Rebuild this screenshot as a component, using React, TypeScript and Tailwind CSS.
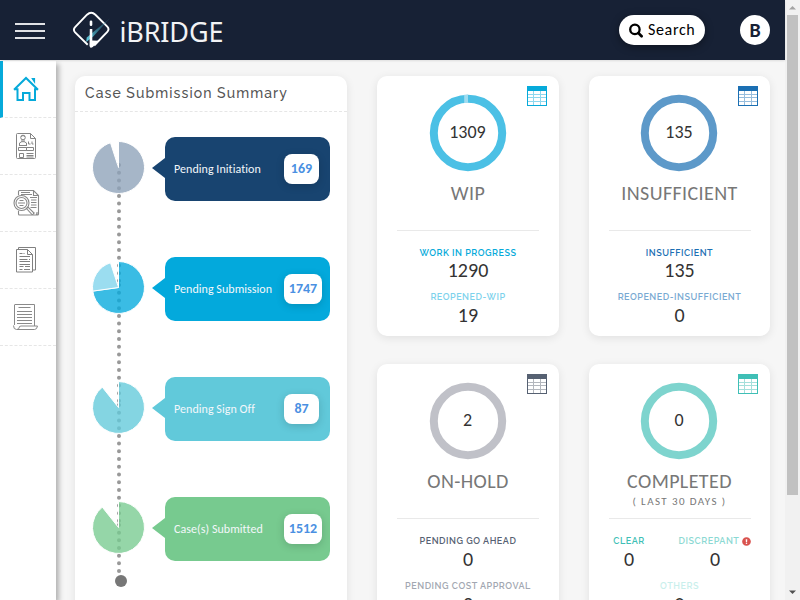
import React from "react";
import { FaExclamationCircle } from "react-icons/fa";

const polar = (deg: number, r: number, cx: number, cy: number) => {
  const a = (deg * Math.PI) / 180;
  return `${(cx + r * Math.sin(a)).toFixed(2)} ${(cy - r * Math.cos(a)).toFixed(2)}`;
};

const slice = (from: number, to: number, r: number, c: number) =>
  `M${c} ${c}L${polar(from, r, c, c)}A${r} ${r} 0 ${to - from > 180 ? 1 : 0} 1 ${polar(to, r, c, c)}Z`;

type Slice = { from: number; to: number; color: string };

function Pie({ slices }: { slices: Slice[] }) {
  return (
    <svg className="relative h-[54px] w-[54px]" viewBox="0 0 54 54">
      {slices.map((s) => (
        <path key={s.from} d={slice(s.from, s.to, 26, 26.5)} fill={s.color} fillOpacity="0.78" stroke="#fff" strokeWidth="1" />
      ))}
    </svg>
  );
}

function Logo() {
  return (
    <svg className="h-[40px] w-[40px]" viewBox="0 0 40 40" fill="none">
      <defs>
        <linearGradient id="streak" x1="14" y1="30" x2="38" y2="8" gradientUnits="userSpaceOnUse">
          <stop stopColor="#5cc9dd" />
          <stop offset="1" stopColor="#2b6f86" stopOpacity="0.2" />
        </linearGradient>
      </defs>
      <g transform="translate(.7 0)">
        <path d="M15 34.800L2.400 22.400Q0 19.800 2.400 17.200L14.300 4.700Q18.500 .6 22.700 4.700L34.600 16.600Q37 19.200 34.600 21.800L21.500 35.500" stroke="#fff" strokeWidth="1.900" />
        <path d="M13.500 32L14 27.500L37.500 8L20.500 26.500Z" fill="url(#streak)" />
        <path d="M18.300 11.800v3" stroke="#fff" strokeWidth="2.600" strokeLinecap="round" />
        <path d="M17.100 19h2.500v11.500l6.500.3-6 6.200q-1.500 1.200-2.500.6l-.8-1.600z" fill="#fff" />
      </g>
    </svg>
  );
}

function SearchGlyph() {
  return (
    <svg className="mr-[5px] h-[15px] w-[14px]" viewBox="0 0 14 15" fill="none" stroke="#000">
      <circle cx="5.900" cy="6.400" r="4.700" strokeWidth="2.300" />
      <path d="M9.400 10l3.200 3.200" strokeWidth="2.700" strokeLinecap="round" />
    </svg>
  );
}

function HomeIcon() {
  return (
    <svg className="h-[26px] w-[26px]" viewBox="0 0 26 26" fill="none" stroke="#06aada" strokeWidth="2">
      <path d="M1 13.800L13 2 25 13.800M1 13.200h3.500V24H10v-7h6.500v7H22V13.200h3" />
      <path d="M19.300 2.700h2.200v3.300z" fill="#06aada" strokeWidth="1.200" />
    </svg>
  );
}

function ProfileIcon() {
  return (
    <svg className="h-[28px] w-[26px]" viewBox="0 0 26 28" fill="none" stroke="#858585" strokeWidth="1">
      <path d="M5 1.500h12.500l5 5v19q0 1-1 1h-17q-1 0-1-1V2.500q0-1 1-1zM17.500 1.500v5h5" />
      <circle cx="10" cy="5.500" r="2.300" />
      <path d="M8 4.500q2-2 4 0M9 7.500v2.200h2V7.500M6.500 13.500v-2.500l2.500-1.500M13.500 13.500v-2.500L11 9.500M6 13.500h8M15.500 9.500v2.500h2M19 9.500v2.500h1.500M5.500 15.500h8v3h-8zM13.500 15.500h7v3h-7zM6.500 21.500h4v4h-4zM13.500 21.500h7M13.500 23.500h7M13.500 25h7" />
    </svg>
  );
}

function SearchDocIcon() {
  return (
    <svg className="h-[28px] w-[28px]" viewBox="0 0 28 28" fill="none" stroke="#888" strokeWidth="1.100">
      <path d="M5.500 6V2.500q0-1 1-1H20.500l5 5v18.500q0 1-1 1h-18q-1 0-1-1V22M20.500 1.500v5h5M8 3.500h9M8 5.500h11M17 8.500h7M18 11h5.500M18 13.500h5.500M18 16h5.500M17.500 18.500h6M21 24h.8M23 25h1v-2" />
      <circle cx="8.500" cy="14" r="7.500" fill="#fff" />
      <circle cx="8.500" cy="14" r="5.500" />
      <path d="M6.500 11.500h4M5 14h7M6.500 16.500h4M13.500 19.500l1.500-1.500 5.500 5.500q.5 2-1.500 2z" />
    </svg>
  );
}

function PagesIcon() {
  return (
    <svg className="h-[28px] w-[26px]" viewBox="0 0 26 28" fill="none" stroke="#808080" strokeWidth="1">
      <path d="M3.500 3.500h11l5 5v17.500h-16zM14.500 3.500v5h5" />
      <path d="M5.500 3.500v-2h17V24h-3" />
      <path d="M6.500 7.500h3M10.500 7.500h1M6.500 10.500h10.500M6.500 13.500h8M16 13.500h1M6.500 15.500h10.500M6.500 18.500h10.500M6.500 20.500h4M12 20.500h5M6.500 23.500h3M11 23.500h6" />
    </svg>
  );
}

function ScrollIcon() {
  return (
    <svg className="h-[28px] w-[26px]" viewBox="0 0 26 28" fill="none" stroke="#8a8a8a" strokeWidth="1">
      <path d="M1.500 22V2q0-.5.500-.5h19.500v21.500M.5 22.500q0 4 3 4h18q2.500 0 3-3.500H8q-2 0-2 2 0 1-1.500 1" />
      <path d="M5.500 4.500h12M4 8.500h15M4 11.500h15M4 14.500h15M4 17.500h15M4 20.500h15" />
    </svg>
  );
}

function TableIcon({ color, line }: { color: string; line: string }) {
  return (
    <svg className="absolute right-[12px] top-[10px] h-[20px] w-[20px]" viewBox="0 0 20 20" shapeRendering="crispEdges">
      <path d="M0 0h20v20H0z" fill={color} />
      <path d="M1 5h18v14H1z" fill="#fff" />
      <path d="M1 8.500h18M1 11.500h18M1 15.500h18M6.500 5v14M13.500 5v14" stroke={line} strokeWidth="1" fill="none" />
    </svg>
  );
}

const sideIcons = [HomeIcon, ProfileIcon, SearchDocIcon, PagesIcon, ScrollIcon];

const stages = [
  { label: "Pending Initiation", value: "169", box: "bg-[#184470]", arrow: "border-r-[#184470]", pad: "w-[35px]", slices: [{ from: 0, to: 342, color: "#8da1b9" }] },
  { label: "Pending Submission", value: "1747", box: "bg-[#03a9dc]", arrow: "border-r-[#03a9dc]", pad: "w-[38px]", slices: [{ from: 0, to: 262, color: "#03a9dc" }, { from: 262, to: 342, color: "#7fd3ec" }] },
  { label: "Pending Sign Off", value: "87", box: "bg-[#61c9da]", arrow: "border-r-[#61c9da]", pad: "w-[35px]", slices: [{ from: 0, to: 321.5, color: "#61c9da" }] },
  { label: "Case(s) Submitted", value: "1512", box: "bg-[#77ca8f]", arrow: "border-r-[#77ca8f]", pad: "w-[38px]", slices: [{ from: 0, to: 321.5, color: "#77ca8f" }] },
];

function Stat({ label, value, color }: { label: React.ReactNode; value: string; color: string }) {
  return (
    <div className="flex h-[45px] flex-col items-center whitespace-nowrap">
      <div className={`flex h-[12px] items-center pt-px font-['Raleway','Lato',sans-serif] text-[9px] font-semibold leading-none tracking-[0.53px] ${color}`}>{label}</div>
      <div className="flex h-[24px] items-center pb-px text-[20px] leading-none text-[#333]">{value}</div>
    </div>
  );
}

type CardProps = {
  total: string;
  title: string;
  ring: string;
  color: string;
  line: string;
  note?: string;
  marker?: boolean;
  tall?: boolean;
  children: React.ReactNode;
};

function Card({ total, title, ring, color, line, note, marker, tall, children }: CardProps) {
  return (
    <section className={`relative flex flex-col items-center rounded-[10px] bg-white pt-[18px] shadow-[0_2px_10px_rgba(0,0,0,0.09)] ${tall ? "h-[305px]" : "h-[260px]"}`}>
      <TableIcon color={color} line={line} />
      <div className="mr-px grid h-[78px] w-[78px] place-items-center">
        <svg className="col-start-1 row-start-1 h-[78px] w-[78px]" viewBox="0 0 78 78" fill="none">
          <circle cx="39" cy="39" r="34.200" stroke={ring} strokeWidth="8" />
          {marker && <path d="M35.200 9V.8q2-.3 3.800-.3V9z" fill="#9fdcf0" />}
        </svg>
        <span className="col-start-1 row-start-1 pb-[2px] text-[18px] leading-none text-[#333]">{total}</span>
      </div>
      <h2 className="mt-[10px] flex h-[22px] items-center whitespace-nowrap text-[20px] leading-none tracking-[0.4px] text-[#777]">{title}</h2>
      <div className="flex h-[26px] items-start pt-[4px] text-[11px] leading-none tracking-[1.4px] text-[#777]">{note}</div>
      <div className="mb-[16px] h-px w-[142px] bg-[#e9e9e9]" />
      {children}
    </section>
  );
}

export default function App() {
  return (
    <div className="flex h-[600px] w-[800px] overflow-hidden bg-[#f6f6f6] font-['Carlito','Calibri','Lato',sans-serif]">
      <div className="flex w-[785px] flex-col">
        <header className="z-10 flex h-[60px] shrink-0 items-center bg-[#172135] shadow-[0_1px_2px_rgba(0,0,0,0.1)]">
          <div className="ml-[15px] mt-[2px] flex w-[30px] flex-col gap-[5px]">
            <span className="h-[2px] bg-[#e0e2e5]" />
            <span className="h-[2px] bg-[#e0e2e5]" />
            <span className="h-[2px] bg-[#e0e2e5]" />
          </div>
          <div className="ml-[27px] flex items-center">
            <Logo />
            <span className="ml-[7.5px] mt-[3px] font-['Noto_Sans',sans-serif] text-[27px] font-normal leading-none tracking-[-0.15px] text-[#f2f3f5]">iBRIDGE</span>
          </div>
          <div className="ml-auto mr-[35px] flex h-[30px] w-[86px] items-center rounded-full bg-white pl-[10px] text-[16px] leading-none tracking-[0.65px] text-black shadow-[0_2px_8px_rgba(0,0,0,0.4)]">
            <SearchGlyph />
            Search
          </div>
          <div className="mr-[15px] flex h-[30px] w-[30px] items-center justify-center rounded-full bg-white text-[20px] font-bold leading-none text-[#172135]">B</div>
        </header>

        <div className="flex h-[540px]">
          <nav className="mt-px w-[56px] bg-white shadow-[3px_3px_5px_rgba(0,0,0,0.28)]">
            {sideIcons.map((Icon, i) => (
              <div key={i} className={`flex h-[57px] items-center border-b border-dashed border-[#e6e6e6] ${i === 0 ? "border-l-[3px] border-l-[#06aada] [border-left-style:solid] pl-[10px]" : "pl-[13px]"}`}>
                <Icon />
              </div>
            ))}
          </nav>

          <main className="ml-[19px] mt-[16px] flex items-start">
            <section className="h-[560px] w-[272px] rounded-t-[10px] bg-white shadow-[0_2px_10px_rgba(0,0,0,0.09)]">
              <h1 className="flex h-[36px] items-center whitespace-nowrap border-b border-dashed border-[#e6e6e6] pb-px pl-[10px] font-['Raleway','Lato',sans-serif] text-[14px] font-medium leading-none tracking-[1.08px] text-[#555]">Case Submission Summary</h1>
              <div className="relative pt-[25px]">
                <div className="absolute left-[42px] top-[51px]">
                  <div className="h-[120px] border-l-4 border-dotted border-[#999]" />
                  <div className="h-[120px] border-l-4 border-dotted border-[#999]" />
                  <div className="h-[120px] border-l-4 border-dotted border-[#999]" />
                  <div className="h-[50px] border-l-4 border-dotted border-[#999]" />
                </div>
                <div className="absolute left-[40px] top-[463px] h-[12px] w-[12px] rounded-full bg-[#777]" />
                {stages.map((s) => (
                  <div key={s.label} className="mb-[56px] flex h-[64px] items-center">
                    <div className="ml-[17px] mr-[6px] h-[56px]">
                      <Pie slices={s.slices} />
                    </div>
                    <div className={`mb-[2px] h-0 w-0 border-y-[10px] border-r-[13px] border-y-transparent ${s.arrow}`} />
                    <div className={`flex h-[64px] w-[165px] items-center rounded-[10px] pl-[9px] ${s.box}`}>
                      <span className="w-[110px] whitespace-nowrap text-[12px] leading-none tracking-[0.05px] text-[#f3f7fa] [font-variant-ligatures:none]">{s.label}</span>
                      <span className={`flex h-[30px] items-center justify-center rounded-[8px] bg-white text-[14px] font-bold leading-none text-[#4a90e2] shadow-[0_2px_8px_rgba(0,0,0,0.16)] ${s.pad}`}>{s.value}</span>
                    </div>
                  </div>
                ))}
              </div>
            </section>

            <div className="ml-[30px] grid grid-cols-[182px_181px] gap-x-[30px] gap-y-[28px]">
              <Card total="1309" title="WIP" ring="#4bc0e5" color="#06aada" line="#8ed7ee" marker>
                <Stat label="WORK IN PROGRESS" value="1290" color="text-[#06aada]" />
                <Stat label="REOPENED-WIP" value="19" color="text-[#7dd2ec]" />
              </Card>
              <Card total="135" title="INSUFFICIENT" ring="#5d99c9" color="#1b6fb3" line="#96bddd">
                <Stat label="INSUFFICIENT" value="135" color="text-[#1b6fb3]" />
                <Stat label="REOPENED-INSUFFICIENT" value="0" color="text-[#78a9d2]" />
              </Card>
              <Card total="2" title="ON-HOLD" ring="#c0c1c8" color="#566172" line="#b3b7bd" tall>
                <Stat label="PENDING GO AHEAD" value="0" color="text-[#566172]" />
                <Stat label="PENDING COST APPROVAL" value="2" color="text-[#a2a7b1]" />
              </Card>
              <Card total="0" title="COMPLETED" ring="#7ed4ce" color="#3fbfb6" line="#a4dfdb" note="( LAST 30 DAYS )" tall>
                <div className="flex w-[181px]">
                  <div className="w-[80px]">
                    <Stat label="CLEAR" value="0" color="text-[#3fbfb6]" />
                  </div>
                  <div className="w-[92px]">
                    <Stat label={<>DISCREPANT<FaExclamationCircle className="ml-[3px] h-[9px] w-[9px] text-[#d9534f]" /></>} value="0" color="text-[#8cd9d3]" />
                  </div>
                </div>
                <Stat label="OTHERS" value="0" color="text-[#c9efec]" />
              </Card>
            </div>
          </main>
        </div>
      </div>

      <div className="flex w-[15px] flex-col items-center bg-[#f1f1f1]">
        <svg className="h-[15px] w-[15px]" viewBox="0 0 15 15"><path d="M4 9.500h7L7.500 6z" fill="#a3a3a3" /></svg>
        <div className="h-[480px] w-[11px] bg-[#c1c1c1]" />
        <svg className="mt-auto h-[15px] w-[15px]" viewBox="0 0 15 15"><path d="M4 5.500h7L7.500 9z" fill="#505050" /></svg>
      </div>
    </div>
  );
}
